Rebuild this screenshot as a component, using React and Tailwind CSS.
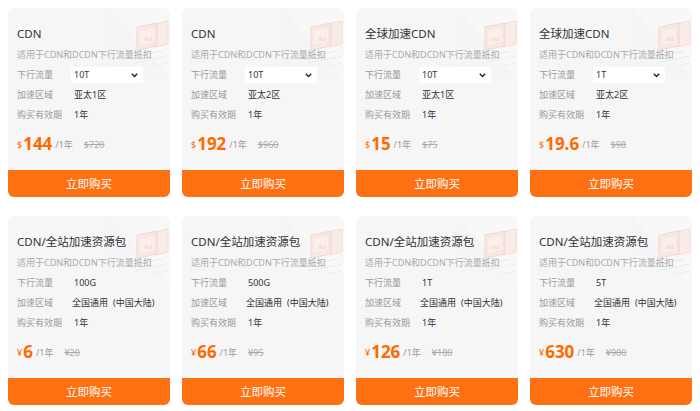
const cards = [
  { title: 'CDN', select: '10T', region: '亚太1区', price: '144', old: '$720', cur: '$' },
  { title: 'CDN', select: '10T', region: '亚太2区', price: '192', old: '$960', cur: '$' },
  { title: '全球加速CDN', select: '10T', region: '亚太1区', price: '15', old: '$75', cur: '$' },
  { title: '全球加速CDN', select: '1T', region: '亚太2区', price: '19.6', old: '$98', cur: '$' },
  { title: 'CDN/全站加速资源包', flow: '100G', region: '全国通用', price: '6', old: '¥20', cur: '¥' },
  { title: 'CDN/全站加速资源包', flow: '500G', region: '全国通用', price: '66', old: '¥95', cur: '¥' },
  { title: 'CDN/全站加速资源包', flow: '1T', region: '全国通用', price: '126', old: '¥180', cur: '¥' },
  { title: 'CDN/全站加速资源包', flow: '5T', region: '全国通用', price: '630', old: '¥900', cur: '¥' },
];

// faint laptop/panel illustration in the top-right corner
const Art = () => (
  <svg className="absolute right-0 top-0 opacity-70" width="60" height="70" viewBox="0 0 60 70" fill="none">
    <path d="M0 0 L60 0 L60 70 Z" fill="#ffffff" opacity="0.35" />
    <path d="M44 16 L58 13 L58 36 L44 39 Z" fill="#fbe2d9" stroke="#f6c7b6" strokeWidth="1" opacity="0.75" />
    <path d="M27 19 L47 15 L47 38 L27 42 Z" fill="#fbded3" stroke="#f4c0ad" strokeWidth="1" opacity="0.8" />
    <path d="M30 23 L44 20 L44 34 L30 37 Z" fill="#fdede7" opacity="0.9" />
    <path d="M33 33 L36 28 L39 31 L42 27 L42 33 Z" fill="#f8cfc0" opacity="0.7" />
    <path d="M20 50 L52 43" stroke="#e4e4e6" strokeWidth="1" />
    <path d="M24 55 L58 48" stroke="#e9e9eb" strokeWidth="1" />
    <path d="M44 58 L58 55" stroke="#eaeaec" strokeWidth="1" />
  </svg>
);

const Row = ({ label, children }) => (
  <div className="flex h-[20px] items-center">
    <span className="w-[57px] shrink-0 text-[9px] text-[#999]">{label}</span>
    {children}
  </div>
);

const Card = ({ c }) => (
  <div className="relative flex h-[189px] flex-col overflow-hidden rounded-md bg-[#f6f6f7]">
    <Art />
    <div className="relative px-[9px] pt-[17px]">
      <div className="text-[11.5px] leading-[18px] text-[#333]">{c.title}</div>
      <div className="mt-[5px] whitespace-nowrap text-[9px] leading-[14px] text-[#aaa]">适用于CDN和DCDN下行流量抵扣</div>
      <div className="mt-[3px]">
        <Row label="下行流量">
          {c.select ? (
            <div className="-ml-[3px] flex h-[16px] w-[72px] items-center justify-between bg-white pl-[3px] pr-[5px]">
              <span className="text-[9px] text-[#333]">{c.select}</span>
              <svg width="7" height="5" viewBox="0 0 7 5">
                <path d="M0.8 0.8 L3.5 3.6 L6.2 0.8" stroke="#222" strokeWidth="1.4" fill="none" />
              </svg>
            </div>
          ) : (
            <span className="text-[9px] text-[#333]">{c.flow}</span>
          )}
        </Row>
        <Row label="加速区域">
          {c.select ? (
            <span className="text-[9px] text-[#333]">{c.region}</span>
          ) : (
            <span className="-ml-[2px] flex whitespace-nowrap text-[9px] text-[#333]">
              <span>{c.region}</span>
              <span className="ml-[5px]">(中国大陆)</span>
            </span>
          )}
        </Row>
        <Row label="购买有效期">
          <span className="text-[9px] text-[#333]">1年</span>
        </Row>
      </div>
      <div className="mt-[6px] flex h-[24px] items-center">
        <span className="mr-[1px] mt-[4px] text-[9px] text-[#ff6a00]">{c.cur}</span>
        <span className="text-[17px] font-bold leading-none text-[#ff6a00]">{c.price}</span>
        <span className="ml-[3px] mt-[3px] text-[9px] text-[#999]">/1年</span>
        <span className="ml-[11px] mt-[3px] text-[9px] text-[#aaa] line-through">{c.old}</span>
      </div>
    </div>
    <button className="relative mt-auto h-[27px] w-full bg-[#ff7012] text-[11.5px] text-white">立即购买</button>
  </div>
);

export default function App() {
  return (
    <div
      className="grid h-[411px] w-[700px] grid-cols-[repeat(4,162px)] content-start gap-x-[12px] gap-y-[19px] bg-white pl-[8px] pt-[8px]"
      style={{ fontFamily: '"Noto Sans", "Noto Sans CJK SC", sans-serif' }}
    >
      {cards.map((c, i) => (
        <Card key={i} c={c} />
      ))}
    </div>
  );
}
